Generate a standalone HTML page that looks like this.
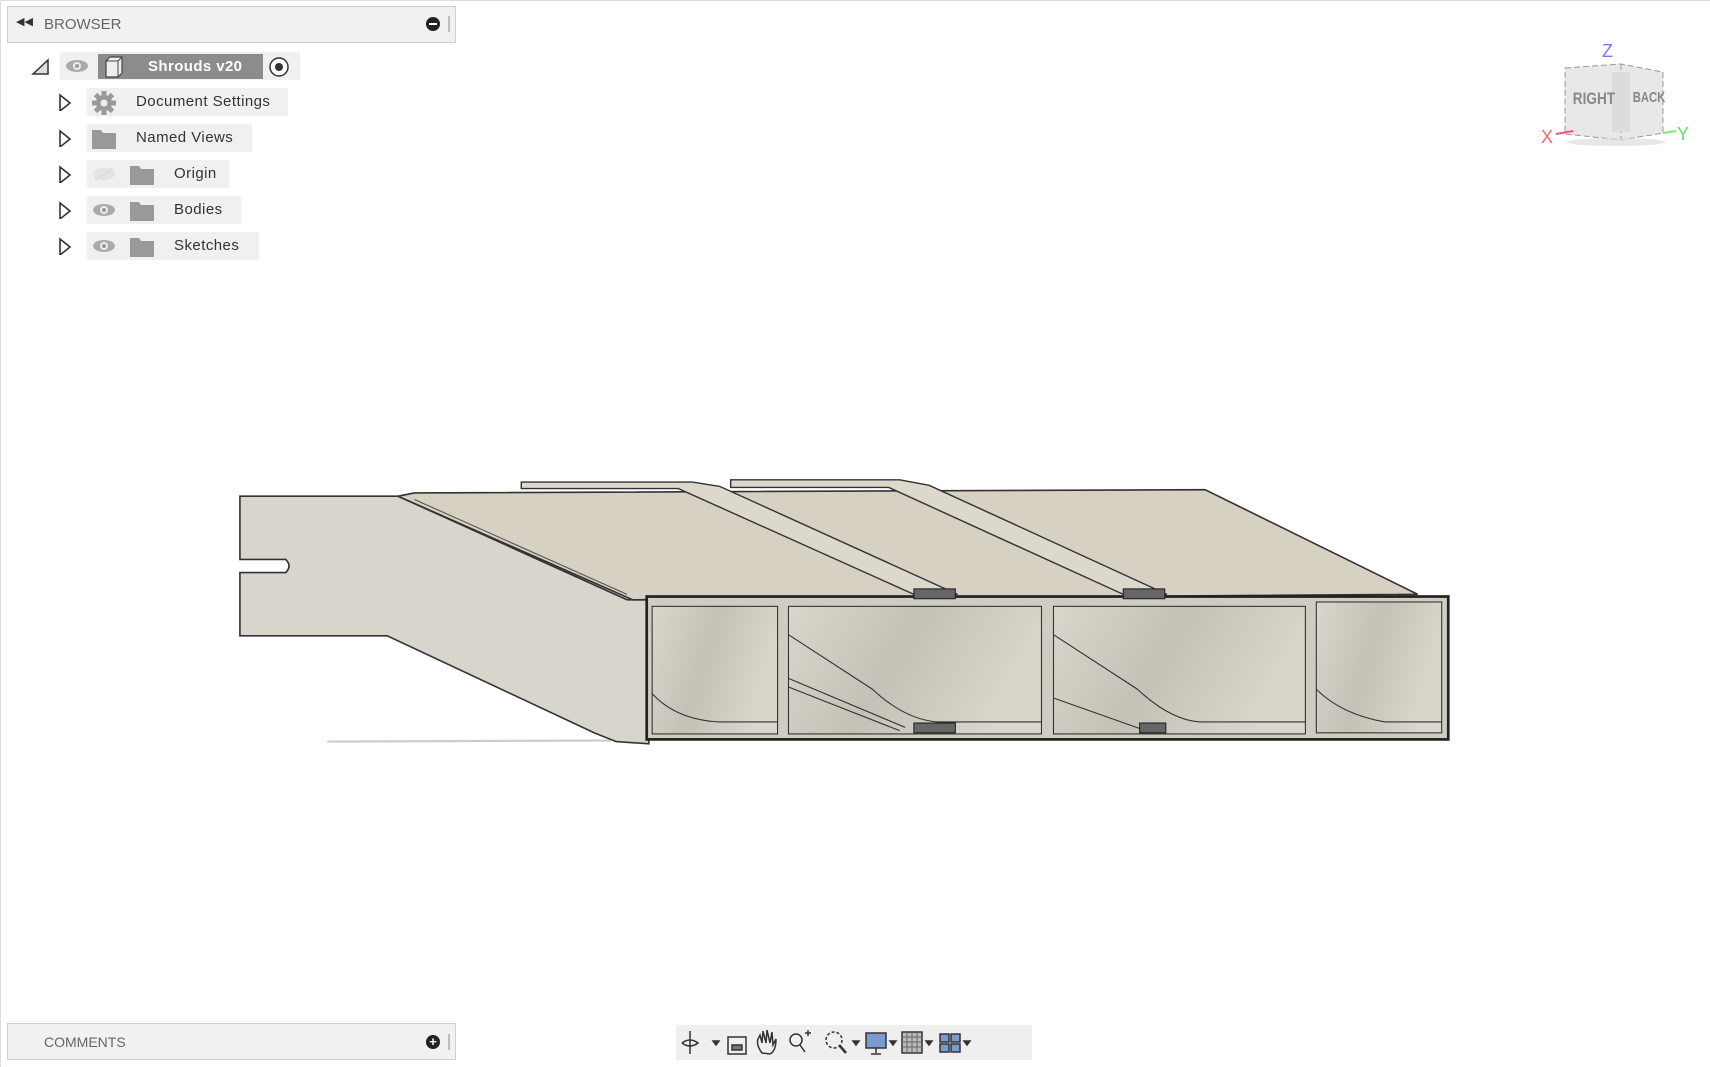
<!DOCTYPE html>
<html><head><meta charset="utf-8"><style>
*{margin:0;padding:0;box-sizing:border-box}
body{width:1710px;height:1067px;background:#fff;position:relative;overflow:hidden;font-family:"Liberation Sans",sans-serif}
.bar{position:absolute;left:7px;width:449px;height:37px;background:#f1f1f1;border:1px solid #cfcfcf;color:#666;font-size:15px}
.row{position:absolute;background:#f0f0f0;height:28px;font-size:15px;color:#333;line-height:28px;letter-spacing:0.45px}
.tri{position:absolute;left:58px;width:14px;height:18px}
svg{position:absolute}
</style></head><body>
<div style="position:absolute;left:0;top:0;width:1710px;height:1px;background:#ddd"></div>
<div style="position:absolute;left:0;top:0;width:1px;height:1067px;background:#ddd"></div>
<div class="bar" style="top:6px">
 <span style="position:absolute;left:8px;top:8px;font-size:11px;color:#333">◀◀</span>
 <span style="position:absolute;left:36px;top:9px">BROWSER</span>
 <span style="position:absolute;left:418px;top:10px;width:14px;height:14px;border-radius:50%;background:#222"><span style="position:absolute;left:3px;top:6px;width:8px;height:2px;background:#fff"></span></span>
 <span style="position:absolute;left:440px;top:9px;width:2px;height:16px;background:#bbb"></span>
</div>
<svg style="left:30px;top:56px" width="22" height="22"><path d="M3 18 L18 4 L18 18 Z" fill="#ddd" stroke="#333" stroke-width="1.5"/></svg>
<div class="row" style="left:60px;top:52px;width:240px"></div>
<svg style="left:64px;top:58px" width="26" height="16"><ellipse cx="13" cy="8" rx="11" ry="6" fill="#aaa"/><circle cx="13" cy="8" r="4" fill="#eee"/><circle cx="13" cy="8" r="2" fill="#999"/></svg>
<div style="position:absolute;left:98px;top:54px;width:165px;height:25px;background:#8c8c8c;color:#fff;font-weight:bold;font-size:15px;line-height:25px;padding-left:50px;letter-spacing:0.4px">Shrouds v20</div>
<svg style="left:102px;top:55px" width="24" height="24"><path d="M4 6 L8 2 L20 2 L20 18 L16 22 L4 22 Z" fill="#eee" stroke="#444" stroke-width="1.2"/><path d="M4 6 L16 6 L20 2 M16 6 L16 22" fill="none" stroke="#444"/></svg>
<svg style="left:268px;top:56px" width="22" height="22"><circle cx="11" cy="11" r="9" fill="#fff" stroke="#333" stroke-width="1.5"/><circle cx="11" cy="11" r="4" fill="#333"/></svg>

<svg class="tri" style="top:93px" width="14" height="20"><path d="M2 2 L12 10 L2 18 Z" fill="#fff" stroke="#333" stroke-width="1.6"/></svg>
<div class="row" style="left:87px;top:88px;width:201px;padding-left:49px">Document Settings</div>
<svg style="left:91px;top:90px" width="26" height="26"><g fill="#999" transform="translate(13 13)"><circle r="8"/><g id="t"><rect x="-2.5" y="-12" width="5" height="24"/><rect x="-12" y="-2.5" width="24" height="5"/></g><use href="#t" transform="rotate(45)"/></g><circle cx="13" cy="13" r="3.5" fill="#f0f0f0"/></svg>
<svg class="tri" style="top:129px" width="14" height="20"><path d="M2 2 L12 10 L2 18 Z" fill="#fff" stroke="#333" stroke-width="1.6"/></svg>
<div class="row" style="left:87px;top:124px;width:165px;padding-left:49px">Named Views</div>
<svg style="left:91px;top:128px" width="26" height="22"><path d="M1 2 L10 2 L12 5 L25 5 L25 21 L1 21 Z" fill="#999"/></svg>
<svg class="tri" style="top:165px" width="14" height="20"><path d="M2 2 L12 10 L2 18 Z" fill="#fff" stroke="#333" stroke-width="1.6"/></svg>
<div class="row" style="left:87px;top:160px;width:142px;padding-left:87px">Origin</div>
<svg style="left:91px;top:166px" width="26" height="16"><ellipse cx="13" cy="8" rx="11" ry="6" fill="#e4e4e4"/><path d="M4 14 L22 2" stroke="#ddd" stroke-width="2"/></svg>
<svg style="left:129px;top:164px" width="26" height="22"><path d="M1 2 L10 2 L12 5 L25 5 L25 21 L1 21 Z" fill="#999"/></svg>
<svg class="tri" style="top:201px" width="14" height="20"><path d="M2 2 L12 10 L2 18 Z" fill="#fff" stroke="#333" stroke-width="1.6"/></svg>
<div class="row" style="left:87px;top:196px;width:154px;padding-left:87px">Bodies</div>
<svg style="left:91px;top:202px" width="26" height="16"><ellipse cx="13" cy="8" rx="11" ry="6" fill="#aaa"/><circle cx="13" cy="8" r="4" fill="#eee"/><circle cx="13" cy="8" r="2" fill="#999"/></svg>
<svg style="left:129px;top:200px" width="26" height="22"><path d="M1 2 L10 2 L12 5 L25 5 L25 21 L1 21 Z" fill="#999"/></svg>
<svg class="tri" style="top:237px" width="14" height="20"><path d="M2 2 L12 10 L2 18 Z" fill="#fff" stroke="#333" stroke-width="1.6"/></svg>
<div class="row" style="left:87px;top:232px;width:172px;padding-left:87px">Sketches</div>
<svg style="left:91px;top:238px" width="26" height="16"><ellipse cx="13" cy="8" rx="11" ry="6" fill="#aaa"/><circle cx="13" cy="8" r="4" fill="#eee"/><circle cx="13" cy="8" r="2" fill="#999"/></svg>
<svg style="left:129px;top:236px" width="26" height="22"><path d="M1 2 L10 2 L12 5 L25 5 L25 21 L1 21 Z" fill="#999"/></svg>

<svg style="left:1530px;top:30px" width="180" height="130" viewBox="1530 30 180 130">
<text x="1602" y="57" font-size="18" fill="#7777ee" font-family="Liberation Sans">Z</text>
<path d="M1565 68 L1621 64 L1663 72 L1663 133 L1621 140 L1565 134 Z" fill="#e8e8e8"/>
<path d="M1565 68 L1621 64 L1663 72 L1663 133 L1621 140 L1565 134 Z M1621 64 L1621 140" fill="none" stroke="#999" stroke-dasharray="6 3"/>
<rect x="1612" y="72" width="18" height="60" fill="#dcdcdc"/>
<text x="1573" y="104" font-size="17" fill="#888" font-weight="bold" font-family="Liberation Sans" transform="scale(0.8 1) translate(393 0)">RIGHT</text>
<text x="1633" y="102" font-size="15" fill="#888" font-weight="bold" font-family="Liberation Sans" transform="scale(0.75 1) translate(544 0)">BACK</text>
<path d="M1556 134 L1573 131" stroke="#f57" stroke-width="2"/>
<path d="M1663 133 L1676 131" stroke="#7e7" stroke-width="2"/>
<text x="1541" y="143" font-size="18" fill="#f66" font-family="Liberation Sans">X</text>
<text x="1677" y="140" font-size="18" fill="#6d6" font-family="Liberation Sans">Y</text>
<ellipse cx="1616" cy="142" rx="50" ry="4" fill="#ddd" opacity="0.7"/>
</svg>

<svg style="left:0;top:0" width="1710" height="1067" viewBox="0 0 1568 978.4">
<defs>
<linearGradient id="cell" x1="0" y1="0" x2="1" y2="0.3"><stop offset="0" stop-color="#d9d6cc"/><stop offset="0.5" stop-color="#c4c1b6"/><stop offset="1" stop-color="#d9d6cc"/></linearGradient>
</defs>
<line x1="300" y1="680" x2="560" y2="679" stroke="#ccc" stroke-width="2"/>
<path d="M220 455 L365 455 L575 550 L595 550 L595 682 L565 680 L545 672 L355 583 L220 583 L220 525 L262 525 Q268 519 262 513 L220 513 Z" fill="#d8d6cc" stroke="#333" stroke-width="1.5"/>
<path d="M365 455 L380 452 L1105 449 L1300 545 L580 550 Z" fill="#d6d1c3" stroke="#333" stroke-width="1.5"/>
<path d="M380 458 L575 545" stroke="#555" stroke-width="1" fill="none"/>
<path d="M478 442 L635 442 L660 446 L878 545 L838 545 L622 448 L478 448 Z" fill="#dcd8cc" stroke="#333" stroke-width="1.3"/>
<path d="M670 440 L825 440 L852 445 L1070 545 L1030 545 L815 447 L670 447 Z" fill="#dcd8cc" stroke="#333" stroke-width="1.3"/>
<rect x="593" y="547" width="735" height="131" fill="#cfccc2" stroke="#222" stroke-width="2.5"/>
<rect x="598" y="556" width="115" height="117" fill="url(#cell)" stroke="#333"/>
<rect x="723" y="556" width="232" height="117" fill="url(#cell)" stroke="#333"/>
<rect x="966" y="556" width="231" height="117" fill="url(#cell)" stroke="#333"/>
<rect x="1207" y="552" width="115" height="120" fill="url(#cell)" stroke="#333"/>
<g fill="none" stroke="#333" stroke-width="1">
<path d="M598 636 Q620 660 660 662 L713 662"/>
<path d="M723 582 L800 632 Q830 660 860 662 L955 662"/>
<path d="M723 622 L830 667 M723 630 L825 670"/>
<path d="M966 582 L1043 632 Q1073 660 1100 662 L1197 662"/>
<path d="M966 640 L1045 668"/>
<path d="M1207 632 Q1230 655 1270 662 L1322 662"/>
</g>
<rect x="838" y="540" width="38" height="9" fill="#666" stroke="#222"/>
<rect x="1030" y="540" width="38" height="9" fill="#666" stroke="#222"/>
<rect x="838" y="663" width="38" height="9" fill="#666" stroke="#222"/>
<rect x="1045" y="663" width="24" height="9" fill="#666" stroke="#222"/>
</svg>

<div class="bar" style="top:1023px">
 <span style="position:absolute;left:36px;top:10px;font-size:14px">COMMENTS</span>
 <span style="position:absolute;left:418px;top:11px;width:14px;height:14px;border-radius:50%;background:#222;color:#fff;font-size:13px;line-height:14px;text-align:center;font-weight:bold">+</span>
 <span style="position:absolute;left:440px;top:10px;width:2px;height:16px;background:#bbb"></span>
</div>
<div style="position:absolute;left:676px;top:1025px;width:356px;height:35px;background:#efefef"></div>
<svg style="left:676px;top:1025px" width="356" height="35">
<g stroke="#333" fill="none" stroke-width="1.5">
<path d="M14 6 L14 29 M6 18 Q14 12 22 18 Q14 24 6 18"/><path d="M37 16 l3 4 l3 -4z" fill="#333"/>
<rect x="52" y="12" width="18" height="17"/><path d="M56 20 h10 v5 h-10z" fill="#777"/>
<path d="M86 28 Q80 20 82 14 L84 10 L86 18 L87 6 L90 18 L91 5 L94 18 L96 7 L97 20 L100 14 Q100 26 94 29 Z"/>
<circle cx="120" cy="15" r="6"/><path d="M124 20 L129 27"/><path d="M129 8 h6 M132 5 v6"/>
<circle cx="158" cy="15" r="8" stroke-dasharray="3 2"/><path d="M164 21 L170 28" stroke-width="2.5"/><path d="M177 16 l3 4 l3 -4z" fill="#333"/>
<rect x="190" y="8" width="20" height="15" fill="#7a9bd0"/><path d="M200 23 v5 M195 29 h10"/><path d="M214 16 l3 4 l3 -4z" fill="#333"/>
<rect x="226" y="7" width="20" height="21" fill="#bbb"/><path d="M231 7 v21 M236 7 v21 M241 7 v21 M226 12 h20 M226 17 h20 M226 22 h20" stroke="#666" stroke-width="1"/><path d="M250 16 l3 4 l3 -4z" fill="#333"/>
<rect x="264" y="9" width="9" height="8" fill="#7a9bd0"/><rect x="275" y="9" width="9" height="8" fill="#7a9bd0"/><rect x="264" y="19" width="9" height="8" fill="#7a9bd0"/><rect x="275" y="19" width="9" height="8" fill="#7a9bd0"/><path d="M288 16 l3 4 l3 -4z" fill="#333"/>
</g></svg>
</body></html>
